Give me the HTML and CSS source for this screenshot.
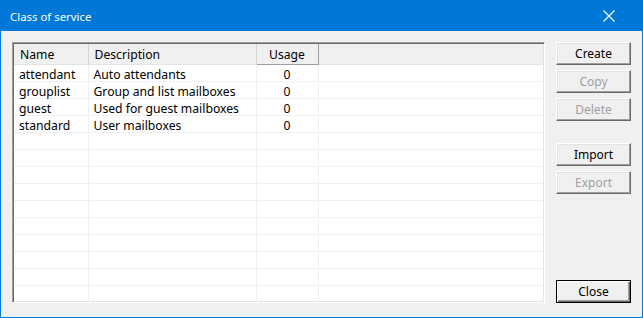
FILE: index.html
```html
<!DOCTYPE html>
<html lang="en">
<head>
    <meta charset="UTF-8">
    <title>Class of service</title>
    <link rel="stylesheet" href="styles.css">
</head>
<body>
    <div class="window">
        <div class="titlebar">
            <span class="title">Class of service</span>
            <svg class="close-x" width="12" height="12" viewBox="0 0 12 12">
                <path d="M0.5 0.5 L11.5 11.5 M11.5 0.5 L0.5 11.5" stroke="#fff" stroke-width="1.1" fill="none"/>
            </svg>
        </div>

        <div class="content">
            <!-- Lista de clases de servicio -->
            <div class="listbox">
                <table class="grid">
                    <thead>
                        <tr>
                            <th class="col-name">Name</th>
                            <th class="col-desc">Description</th>
                            <th class="col-usage">Usage</th>
                            <th class="col-fill"></th>
                        </tr>
                    </thead>
                    <tbody>
                        <tr><td>attendant</td><td>Auto attendants</td><td class="num">0</td><td></td></tr>
                        <tr><td>grouplist</td><td>Group and list mailboxes</td><td class="num">0</td><td></td></tr>
                        <tr><td>guest</td><td>Used for guest mailboxes</td><td class="num">0</td><td></td></tr>
                        <tr><td>standard</td><td>User mailboxes</td><td class="num">0</td><td></td></tr>
                        <tr><td></td><td></td><td></td><td></td></tr>
                        <tr><td></td><td></td><td></td><td></td></tr>
                        <tr><td></td><td></td><td></td><td></td></tr>
                        <tr><td></td><td></td><td></td><td></td></tr>
                        <tr><td></td><td></td><td></td><td></td></tr>
                        <tr><td></td><td></td><td></td><td></td></tr>
                        <tr><td></td><td></td><td></td><td></td></tr>
                        <tr><td></td><td></td><td></td><td></td></tr>
                        <tr><td></td><td></td><td></td><td></td></tr>
                        <tr><td></td><td></td><td></td><td></td></tr>
                    </tbody>
                </table>
            </div>

            <!-- Botones -->
            <div class="buttons">
                <button class="btn">Create</button>
                <button class="btn" disabled>Copy</button>
                <button class="btn" disabled>Delete</button>
                <button class="btn btn-group">Import</button>
                <button class="btn" disabled>Export</button>
                <button class="btn btn-default">Close</button>
            </div>
        </div>
    </div>
</body>
</html>
```

FILE: styles.css
```css
body {
    margin: 0;
    padding: 0;
    font-family: "Noto Sans", "Open Sans", sans-serif;
    font-size: 12.2px;
    color: #000;
    background: #f0f0f0;
}
.window {
    width: 643px;
    height: 318px;
    box-sizing: border-box;
    border: 1px solid #0078d7;
    border-top: none;
    background: #f0f0f0;
    display: flex;
    flex-direction: column;
}
.titlebar {
    height: 31px;
    margin: 0 -1px;
    background: #0078d7;
    color: #fff;
    display: flex;
    align-items: center;
    justify-content: space-between;
    padding: 0 28px 0 10px;
    flex-shrink: 0;
}
.title {
    font-size: 11.4px;
    margin-top: 1px;
}
.close-x {
    display: block;
    margin-top: 0;
}
.content {
    flex: 1;
    display: flex;
    gap: 11px;
    padding: 11px 11px 14px 11px;
    min-height: 0;
}
.listbox {
    width: 533px;
    box-sizing: border-box;
    border: 1px solid;
    border-color: #a0a0a0 #ffffff #ffffff #a0a0a0;
    box-shadow: inset 1px 1px 0 #696969, inset -1px -1px 0 #e3e3e3;
    padding: 1px;
    background: #fff;
    overflow: hidden;
}
.grid {
    width: 100%;
    border-collapse: collapse;
    table-layout: fixed;
}
.grid th {
    height: 20px;
    padding: 1px 0 0 6px;
    font-weight: normal;
    text-align: left;
    background: #f0f0f0;
    border-right: 1px solid #d5d5d5;
    border-bottom: 1px solid #e3e3e3;
    box-sizing: border-box;
}
.grid th.col-name {
    width: 74px;
}
.grid th.col-desc {
    width: 168px;
}
.grid th.col-usage {
    width: 62px;
    text-align: center;
    padding: 1px 0 0 0;
    border-right: 1px solid #a0a0a0;
    border-bottom: 1px solid #a0a0a0;
}
.grid th.col-fill {
    border-right: none;
}
.grid td {
    height: 13px;
    padding: 3px 0 0 5px;
    border-right: 1px solid #f0f0f0;
    border-bottom: 1px solid #f0f0f0;
    white-space: nowrap;
    line-height: 13px;
}
.grid td:last-child {
    border-right: none;
}
.grid td.num {
    text-align: center;
    padding: 3px 0 0 0;
}
.buttons {
    width: 75px;
    display: flex;
    flex-direction: column;
    gap: 5px;
}
.btn {
    width: 75px;
    height: 23px;
    padding: 0;
    font-family: "Noto Sans", "Open Sans", sans-serif;
    font-size: 12px;
    color: #000;
    background: #f0f0f0;
    border: 1px solid;
    border-color: #ffffff #696969 #696969 #ffffff;
    box-shadow: inset -1px -1px 0 #a0a0a0, inset 1px 1px 0 #e3e3e3;
    box-sizing: border-box;
}
.btn:disabled {
    color: #a0a0a0;
}
.btn-group {
    margin-top: 17px;
}
.btn-default {
    margin-top: auto;
    border: 1px solid #000;
    box-shadow: inset 1px 1px 0 #fff, inset -1px -1px 0 #696969, inset -2px -2px 0 #a0a0a0;
}
```
